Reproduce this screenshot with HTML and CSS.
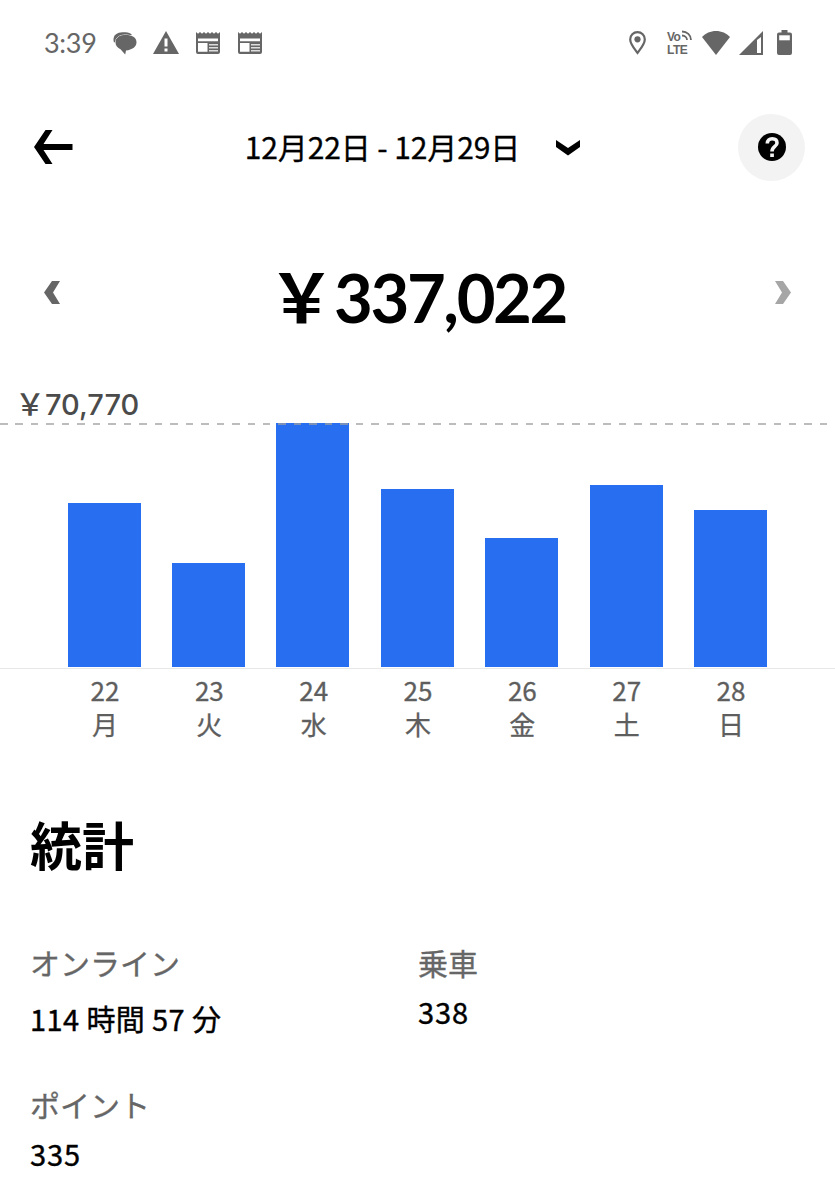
FILE: index.html
```html
<!DOCTYPE html>
<html lang="ja">
<head>
    <meta charset="UTF-8">
    <meta name="viewport" content="width=device-width, initial-scale=1.0">
    <title>統計</title>
    <link rel="stylesheet" href="styles.css">
</head>
<body>
    <!-- Status bar -->
    <div class="status-bar">
        <div class="status-left">
            <span class="status-time">3:39</span>
            <svg class="icon-chat" width="24" height="24" viewBox="0 0 24 24">
                <path d="M1 11.500C-1 5.500 3 1.200 9.500 1.200h3c3 0 5 .8 6.500 2.800z" fill="#666"/>
                <path d="M12.500 4c6.500 0 11 2.500 11 7.200s-4.500 7.700-10.500 8.200l-.8 4-4.700-5.200C4.500 17 2.500 14.500 2.500 11.500 2.500 6.500 6.500 4 12.500 4z" fill="#666" stroke="#fff" stroke-width="1" paint-order="stroke"/>
            </svg>
            <svg class="icon-warning" width="26" height="23" viewBox="0 0 26 23">
                <path d="M13 0l13 23H0z" fill="#666"/>
                <path d="M11.500 7.500h3v8h-3zM11.500 17.500h3v3h-3z" fill="#fff"/>
            </svg>
            <svg class="icon-news" width="24" height="22" viewBox="0 0 24 22">
                <path d="M0 0l2 1.800L4 0l2 1.800L8 0l2 1.800L12 0l2 1.800L16 0l2 1.800L20 0l2 1.800L24 0v20a2 2 0 0 1-2 2H2a2 2 0 0 1-2-2z" fill="#666"/>
                <path d="M2 6.500h20v2.700H2zM2 11h9.500v8.800H2z" fill="#fff"/>
                <path d="M13 12h9v1.500h-9zM13 15h9v1.500h-9zM13 18h9v1.500h-9z" fill="#ddd"/>
            </svg>
            <svg class="icon-news" width="24" height="22" viewBox="0 0 24 22">
                <path d="M0 0l2 1.800L4 0l2 1.800L8 0l2 1.800L12 0l2 1.800L16 0l2 1.800L20 0l2 1.800L24 0v20a2 2 0 0 1-2 2H2a2 2 0 0 1-2-2z" fill="#666"/>
                <path d="M2 6.500h20v2.700H2zM2 11h9.500v8.800H2z" fill="#fff"/>
                <path d="M13 12h9v1.500h-9zM13 15h9v1.500h-9zM13 18h9v1.500h-9z" fill="#ddd"/>
            </svg>
        </div>
        <div class="status-right">
            <svg class="icon-pin" width="17" height="24" viewBox="0 0 17 24">
                <path d="M8.500 1.200c4.200 0 7.300 3.100 7.300 7.200 0 4.300-3.800 8.800-7.300 13.500-3.500-4.700-7.300-9.200-7.300-13.500 0-4.100 3.100-7.200 7.300-7.200z" fill="none" stroke="#666" stroke-width="2.200"/>
                <circle cx="8.500" cy="8.300" r="3.100" fill="#666"/>
            </svg>
            <div class="volte">
                <div class="volte-top">
                    <span>Vo</span>
                    <svg width="10" height="11" viewBox="0 0 10 11">
                        <path d="M0 1.500C5 1.500 9 5 9 10M0 5.500c3 0 5 2 5 4.500" fill="none" stroke="#666" stroke-width="1.800"/>
                    </svg>
                </div>
                <span class="volte-bottom">LTE</span>
            </div>
            <svg class="icon-wifi" width="28" height="24" viewBox="0 0 28 24">
                <path d="M14 0c5.500 0 10.500 2.300 14 6L14 24 0 6c3.500-3.700 8.500-6 14-6z" fill="#666"/>
            </svg>
            <svg class="icon-signal" width="24" height="24" viewBox="0 0 24 24">
                <path d="M24 0v24H0z" fill="#666"/>
                <path d="M18 9l4-3V22h-4z" fill="#fff"/>
            </svg>
            <svg class="icon-battery" width="15" height="25" viewBox="0 0 15 25">
                <path d="M4.500 0h6v2.500H13a2 2 0 0 1 2 2V23a2 2 0 0 1-2 2H2a2 2 0 0 1-2-2V4.500a2 2 0 0 1 2-2h2.500z" fill="#666"/>
                <path d="M2.200 5.300h10.600v5H2.200z" fill="#fff"/>
            </svg>
        </div>
    </div>

    <!-- Header -->
    <header class="header">
        <svg class="back-arrow" width="40" height="34" viewBox="0 0 40 34">
            <path d="M11.500 0H18.500L9.500 14H38.500v6H9.500L18.500 34h-7L0 17z" fill="#000"/>
        </svg>
        <div class="date-range">
            <span class="date-text">12月22日 - 12月29日</span>
            <svg class="date-chevron" width="24" height="16" viewBox="0 0 24 16">
                <path d="M0 0l12 8L24 0v7L12 15.500 0 7z" fill="#000"/>
            </svg>
        </div>
        <div class="help-btn">
            <svg width="28" height="28" viewBox="0 0 28 28">
                <circle cx="14" cy="14" r="14" fill="#000"/>
                <path d="M9.300 10.500C9.300 7.500 11.200 5.800 14.200 5.800s4.800 1.700 4.800 4.200c0 3.700-5 3.200-5 8.500" fill="none" stroke="#f3f3f3" stroke-width="3.600"/>
                <path d="M12.200 20.500h3.700V24h-3.700z" fill="#f3f3f3"/>
            </svg>
        </div>
    </header>

    <!-- Weekly total -->
    <div class="total">
        <svg width="16" height="23" viewBox="0 0 16 23">
            <path d="M8 0h8L9 11.500 16 23H8L0 11.500z" fill="#666"/>
        </svg>
        <div class="amount"><span class="amount-yen">￥</span><span class="amount-value">337,022</span></div>
        <svg width="16" height="23" viewBox="0 0 16 23">
            <path d="M8 0H0l7 11.500L0 23h8l8-11.500z" fill="#a6a6a6"/>
        </svg>
    </div>

    <!-- Chart -->
    <div class="chart">
        <div class="chart-max"><span class="max-yen">￥</span><span class="max-value">70,770</span></div>
        <div class="chart-bars">
            <div class="bar" style="height: 164.5px"></div>
            <div class="bar" style="height: 104.5px"></div>
            <div class="bar" style="height: 244px"></div>
            <div class="bar" style="height: 178.5px"></div>
            <div class="bar" style="height: 129px"></div>
            <div class="bar" style="height: 182px"></div>
            <div class="bar" style="height: 157.5px"></div>
            <div class="chart-line"></div>
        </div>
        <div class="chart-labels">
            <div class="day"><span>22</span><span>月</span></div>
            <div class="day"><span>23</span><span>火</span></div>
            <div class="day"><span>24</span><span>水</span></div>
            <div class="day"><span>25</span><span>木</span></div>
            <div class="day"><span>26</span><span>金</span></div>
            <div class="day"><span>27</span><span>土</span></div>
            <div class="day"><span>28</span><span>日</span></div>
        </div>
    </div>

    <!-- Stats -->
    <section class="stats">
        <h2>統計</h2>
        <div class="stats-grid">
            <div class="stat">
                <div class="stat-label">オンライン</div>
                <div class="stat-value stat-time">114 時間 57 分</div>
            </div>
            <div class="stat">
                <div class="stat-label">乗車</div>
                <div class="stat-value">338</div>
            </div>
            <div class="stat">
                <div class="stat-label">ポイント</div>
                <div class="stat-value">335</div>
            </div>
        </div>
    </section>
</body>
</html>
```
FILE: styles.css
```css
* {
    box-sizing: border-box;
}

body {
    margin: 0;
    height: 1200px;
    overflow: hidden;
    background: #fff;
    color: #000;
    font-family: "Noto Sans CJK JP", sans-serif;
}

svg {
    display: block;
    flex-shrink: 0;
}

/* Status bar */
.status-bar {
    display: flex;
    justify-content: space-between;
    align-items: center;
    height: 85px;
    padding: 0 43px 0 44px;
    color: #666;
}

.status-left,
.status-right {
    display: flex;
    align-items: center;
}

.status-time {
    width: 69px;
    font-family: Lato, sans-serif;
    font-size: 27px;
    line-height: 30px;
    letter-spacing: -0.3px;
}

.icon-chat {
    margin-right: 16px;
}

.icon-warning {
    margin-right: 17px;
}

.icon-news {
    margin-right: 18px;
}

.icon-pin {
    margin-right: 21px;
}

.volte {
    width: 35px;
    font-family: "Liberation Sans", sans-serif;
    font-size: 12px;
    font-weight: 700;
    line-height: 14px;
    letter-spacing: -0.5px;
}

.volte-top {
    display: flex;
    gap: 2px;
    height: 13px;
}

.volte-bottom {
    display: block;
    height: 13px;
}

.icon-wifi {
    margin-right: 9px;
}

.icon-signal {
    margin-right: 14px;
}

/* Header */
.header {
    display: flex;
    justify-content: space-between;
    align-items: center;
    height: 124px;
    padding: 0 30px 0 34px;
}

.date-range {
    display: flex;
    align-items: center;
    gap: 36px;
    margin-left: 13px;
}

.date-text {
    margin-top: -3px;
    font-size: 30px;
    font-weight: 400;
    line-height: 40px;
    letter-spacing: -0.1px;
    -webkit-text-stroke: 0.3px;
}

.date-chevron {
    margin-top: 1px;
}

.help-btn {
    display: flex;
    align-items: center;
    justify-content: center;
    width: 67px;
    height: 67px;
    border-radius: 50%;
    background: #f3f3f3;
}

/* Weekly total */
.total {
    display: flex;
    justify-content: space-between;
    align-items: center;
    height: 166px;
    padding: 0 44px;
}

.amount {
    display: flex;
    align-items: baseline;
    line-height: 80px;
    margin: 7px 0 0 -1px;
}

.amount-yen {
    font-size: 67px;
    font-weight: 700;
    margin-right: -1px;
}

.amount-value {
    font-family: Lato, sans-serif;
    font-size: 67px;
    font-weight: 700;
    letter-spacing: -2.4px;
}

/* Chart */
.chart-max {
    display: flex;
    align-items: baseline;
    height: 48px;
    padding-left: 15px;
    line-height: 54px;
    color: #4b4b4b;
}

.max-yen {
    font-size: 30px;
    font-weight: 500;
}

.max-value {
    font-family: Inter, sans-serif;
    font-size: 29px;
    font-weight: 500;
}

.chart-bars {
    position: relative;
    display: flex;
    justify-content: space-between;
    align-items: flex-end;
    height: 246px;
    padding: 0 68px 1px 67.5px;
    border-bottom: 1px solid #e8e8e8;
}

.bar {
    width: 73px;
    background: #276ef1;
}

/* Dashed line at the level of the highest day */
.chart-line {
    position: absolute;
    top: 0;
    left: 0;
    right: 0;
    height: 2px;
    background: repeating-linear-gradient(90deg, rgba(160, 160, 160, 0.7) 0 7.5px, transparent 7.5px 15.47px);
}

.chart-labels {
    display: flex;
    justify-content: space-between;
    padding: 4px 66.5px 0 67.5px;
}

.day {
    display: flex;
    flex-direction: column;
    align-items: center;
    width: 75px;
    font-size: 26px;
    line-height: 34px;
    color: #5e5e5e;
    -webkit-text-stroke: 0.3px;
}

/* Stats */
.stats {
    padding: 63px 30px 0;
}

h2 {
    margin: 0;
    font-size: 52px;
    font-weight: 700;
    line-height: 80px;
}

.stats-grid {
    display: grid;
    grid-template-columns: 388px 1fr;
    grid-auto-rows: 142px;
    margin-top: 58px;
}

.stat-label {
    font-size: 30px;
    line-height: 40px;
    color: #666;
    -webkit-text-stroke: 0.3px;
}

.stat-value {
    margin-top: 9px;
    font-size: 29px;
    font-weight: 400;
    line-height: 40px;
    letter-spacing: 0.9px;
    -webkit-text-stroke: 0.4px;
}

.stat-time {
    margin-top: 16px;
    letter-spacing: 0.4px;
}
```
